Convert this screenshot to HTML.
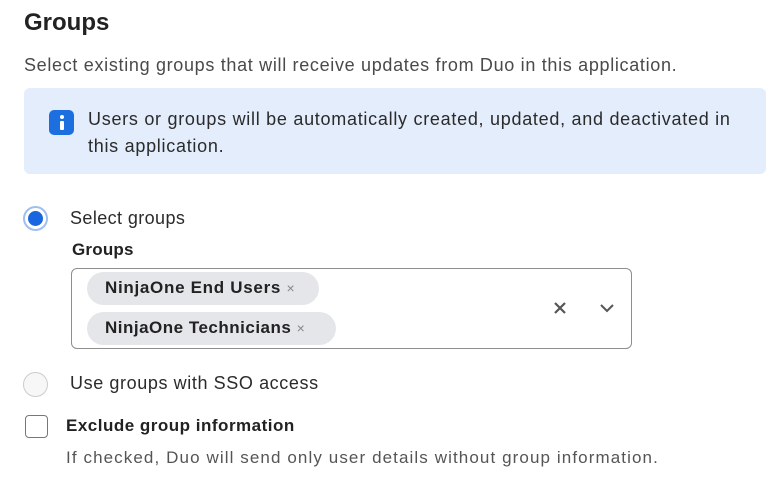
<!DOCTYPE html>
<html><head><style>
body{margin:0;width:780px;height:487px;background:#fff;font-family:"Liberation Sans",sans-serif;color:#2b2b2b;position:relative;overflow:hidden}
.a{position:absolute;white-space:nowrap}
</style></head><body>
<div class="a" style="left:24px;top:9px;font-size:24px;font-weight:bold;color:#222">Groups</div>
<div class="a" style="left:24px;top:55px;font-size:18px;letter-spacing:0.68px;color:#4a4a4a">Select existing groups that will receive updates from Duo in this application.</div>
<div class="a" style="left:24px;top:88px;width:742px;height:86px;background:#e3edfb;border-radius:6px"></div>
<div class="a" style="left:49px;top:110px;width:25px;height:25px;background:#1d6fe0;border-radius:5px"></div>
<div class="a" style="left:60px;top:115px;width:4px;height:4px;background:#fff;border-radius:2px"></div>
<div class="a" style="left:60px;top:121px;width:4px;height:9px;background:#fff;border-radius:1px"></div>
<div class="a" style="left:88px;top:106px;font-size:18px;letter-spacing:0.72px;line-height:27px;color:#2b2b2b">Users or groups will be automatically created, updated, and deactivated in<br>this application.</div>
<div class="a" style="left:23px;top:206px;width:21px;height:21px;border:2px solid #9fbff0;border-radius:50%;background:#fff"></div>
<div class="a" style="left:28px;top:211px;width:15px;height:15px;background:#1a66e0;border-radius:50%"></div>
<div class="a" style="left:70px;top:208px;font-size:18px;letter-spacing:0.4px">Select groups</div>
<div class="a" style="left:72px;top:240px;font-size:17px;letter-spacing:0.2px;font-weight:bold;color:#222">Groups</div>
<div class="a" style="left:71px;top:268px;width:559px;height:79px;border:1.5px solid #8e8e8e;border-radius:6px"></div>
<div class="a" style="left:87px;top:272px;width:232px;height:33px;background:#e4e6ea;border-radius:17px"></div>
<div class="a" style="left:105px;top:278px;font-size:17px;letter-spacing:0.7px;font-weight:bold;color:#222">NinjaOne End Users <span style="font-weight:normal;color:#888;font-size:14px">×</span></div>
<div class="a" style="left:87px;top:312px;width:249px;height:33px;background:#e4e6ea;border-radius:17px"></div>
<div class="a" style="left:105px;top:318px;font-size:17px;letter-spacing:0.5px;font-weight:bold;color:#222">NinjaOne Technicians <span style="font-weight:normal;color:#888;font-size:14px">×</span></div>
<svg class="a" style="left:553px;top:301px" width="14" height="14"><path d="M2 2L12 12M12 2L2 12" stroke="#555" stroke-width="2.2"/></svg>
<svg class="a" style="left:599px;top:303px" width="16" height="10"><path d="M2 2L8 8L14 2" stroke="#555" stroke-width="2" fill="none"/></svg>
<div class="a" style="left:23px;top:372px;width:23px;height:23px;border:1px solid #ccc;border-radius:50%;background:#f7f7f7"></div>
<div class="a" style="left:70px;top:373px;font-size:18px;letter-spacing:0.6px">Use groups with SSO access</div>
<div class="a" style="left:25px;top:415px;width:21px;height:21px;border:1.5px solid #777;border-radius:4px"></div>
<div class="a" style="left:66px;top:416px;font-size:17px;letter-spacing:0.5px;font-weight:bold;color:#222">Exclude group information</div>
<div class="a" style="left:66px;top:448px;font-size:17px;letter-spacing:1.1px;color:#555">If checked, Duo will send only user details without group information.</div>
</body></html>
